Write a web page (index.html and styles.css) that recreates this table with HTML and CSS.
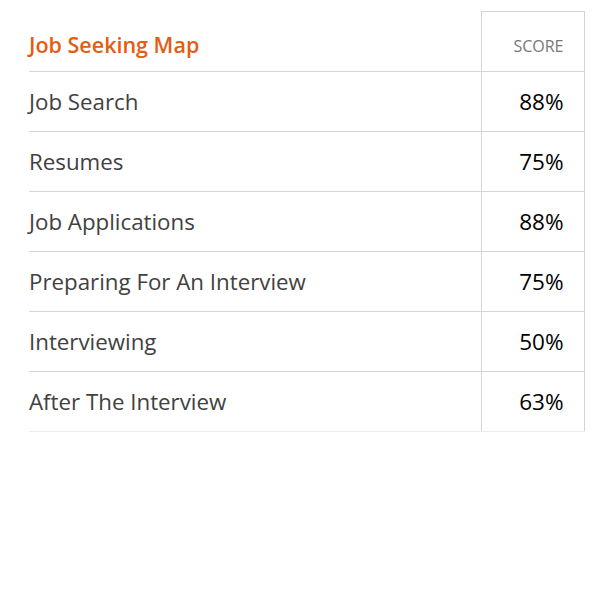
FILE: index.html
```html
<!DOCTYPE html>
<html>
<head>
<meta charset="utf-8">
<link rel="stylesheet" href="styles.css">
</head>
<body>
<table class="map">
  <colgroup>
    <col class="col-name">
    <col class="col-score">
  </colgroup>
  <thead>
    <tr>
      <th class="title">Job Seeking Map</th>
      <th class="score head">SCORE</th>
    </tr>
  </thead>
  <tbody>
    <tr><td class="name">Job Search</td><td class="score">88%</td></tr>
    <tr><td class="name">Resumes</td><td class="score">75%</td></tr>
    <tr><td class="name">Job Applications</td><td class="score">88%</td></tr>
    <tr><td class="name">Preparing For An Interview</td><td class="score">75%</td></tr>
    <tr><td class="name">Interviewing</td><td class="score">50%</td></tr>
    <tr class="last"><td class="name">After The Interview</td><td class="score">63%</td></tr>
  </tbody>
</table>
</body>
</html>
```
FILE: styles.css
```css
html, body {
  margin: 0;
  background: #fff;
}
body {
  padding: 11px 0 0 29px;
  font-family: "Open Sans", "Noto Sans", sans-serif;
}
.map {
  border-collapse: collapse;
  table-layout: fixed;
  width: 555px;
}
.col-name {
  width: 452px;
}
.col-score {
  width: 103px;
}
.map th, .map td {
  box-sizing: border-box;
  height: 60px;
  padding: 0;
  border-bottom: 1px solid #d4d4d4;
  white-space: nowrap;
}
.title {
  text-align: left;
  font-size: 21.5px;
  font-weight: 600;
  color: #e35d12;
  padding-top: 6px !important;
}
.name {
  font-size: 22.3px;
  color: #414141;
}
.score {
  text-align: right;
  padding-right: 20px !important;
  border-left: 1px solid #d4d4d4;
  border-right: 1px solid #d4d4d4;
  font-size: 22.5px;
  color: #000;
}
.score.head {
  border-top: 1px solid #d4d4d4;
  font-size: 16px;
  font-weight: 400;
  color: #777;
  padding-top: 8px !important;
}
.last td {
  border-bottom-color: #ececec;
}
```
